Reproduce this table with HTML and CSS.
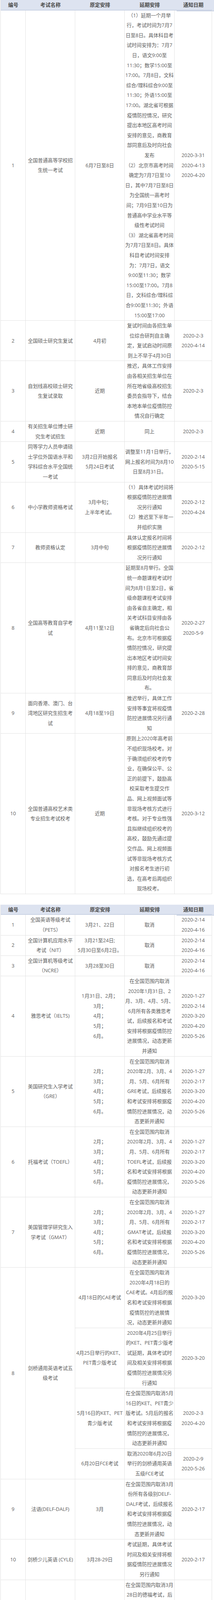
FILE: index.html
```html
<!DOCTYPE html>
<html lang="zh-CN">
<head>
<meta charset="utf-8">
<title>考试延期安排汇总</title>
<link rel="stylesheet" href="styles.css">
</head>
<body>
<div class="page">

<table class="tbl tbl-1">
<colgroup><col class="w1"><col class="w2"><col class="w3"><col class="w4"><col class="w5"></colgroup>
<thead><tr><th>编号</th><th>考试名称</th><th>原定安排</th><th>延期安排</th><th class="last">通知日期</th></tr></thead>
<tbody>
<tr><td>1</td><td>全国普通高等学校招<br>生统一考试</td><td>6月7日至8日</td><td>（1）延期一个月举<br>行，考试时间为7月7<br>日至8日。具体科目考<br>试时间安排为：7月7<br>日，语文9:00至<br>11:30；数学15:00至<br>17:00。7月8日，文科<br>综合/理科综合9:00至<br>11:30；外语15:00至<br>17:00。湖北省可根据<br>疫情防控情况，研究<br>提出本地区高考时间<br>安排的意见，商教育<br>部同意后及时向社会<br>发布<br>（2）北京市高考时间<br>确定为7月7日至10<br>日，其中7月7日至8日<br>为全国统一高考时<br>间；7月9日至10日为<br>普通高中学业水平等<br>级性考试时间<br>（3）湖北省高考时间<br>为7月7日至8日。具体<br>科目考试时间安排<br>为：7月7日，语文<br>9:00至11:30；数学<br>15:00至17:00。7月8<br>日，文科综合/理科综<br>合9:00至11:30；外语<br>15:00至17:00</td><td>2020-3-31<br>2020-4-13<br>2020-4-20</td></tr>
<tr><td>2</td><td>全国硕士研究生复试</td><td>4月初</td><td>复试时间由各招生单<br>位综合研判自主确<br>定，复试启动时间原<br>则上不早于4月30日</td><td>2020-2-3<br>2020-4-14</td></tr>
<tr><td>3</td><td>自划线高校硕士研究<br>生复试录取</td><td>近期</td><td>推迟，具体工作安排<br>由各相关招生单位在<br>所在地省级高校招生<br>委员会指导下，结合<br>本地本单位疫情防控<br>情况自行确定</td><td>2020-2-3</td></tr>
<tr><td>4</td><td>有关招生单位博士研<br>究生考试招生</td><td>近期</td><td>同上</td><td>2020-2-3</td></tr>
<tr><td>5</td><td>同等学力人员申请硕<br>士学位外国语水平和<br>学科综合水平全国统<br>一考试</td><td>3月2日开始报名<br>5月24日考试</td><td>调整至11月1日举行，<br>网上报名时间为8月10<br>日至8月31日。</td><td>2020-2-14<br>2020-5-15</td></tr>
<tr><td>6</td><td>中小学教师资格考试</td><td>3月中旬；<br>上半年考试。</td><td>（1）具体考试时间将<br>根据疫情防控进展情<br>况另行通知<br>（2）推迟至下半年一<br>并组织实施</td><td>2020-2-12<br>2020-4-24</td></tr>
<tr><td>7</td><td>教师资格认定</td><td>3月中旬</td><td>具体认定报名时间将<br>根据疫情防控进展情<br>况另行通知</td><td>2020-2-12</td></tr>
<tr><td>8</td><td>全国高等教育自学考<br>试</td><td>4月11至12日</td><td>延期至8月举行。全国<br>统一命题课程考试时<br>间为8月1日至2日，省<br>级命题课程考试安排<br>由各省自主确定，相<br>关考试科目安排由各<br>省确定后向社会公<br>布。北京市可根据疫<br>情防控情况，研究提<br>出本地区考试时间安<br>排的意见，商教育部<br>同意后及时向社会发<br>布。</td><td>2020-2-27<br>2020-5-9</td></tr>
<tr><td>9</td><td>面向香港、澳门、台<br>湾地区研究生招生考<br>试</td><td>4月18至19日</td><td>推迟举行，具体工作<br>安排等事宜将视疫情<br>防控进展情况另行通<br>知</td><td>2020-2-28</td></tr>
<tr><td>10</td><td>全国普通高校艺术类<br>专业招生考试校考</td><td>近期</td><td>原则上2020年高考前<br>不组织现场校考。对<br>于确须组织校考的专<br>业，在确保公平、公<br>正的前提下，鼓励高<br>校采取考生提交作<br>品、网上视频面试等<br>非现场考核方式进行<br>考核。对于专业性强<br>且拟继续组织校考的<br>高校，鼓励先通过提<br>交作品、网上视频面<br>试等非现场考核方式<br>对报名考生进行初<br>选，在高考后再组织<br>现场校考。</td><td>2020-3-12</td></tr>
</tbody>
</table>

<table class="tbl tbl-2">
<colgroup><col class="w1"><col class="w2"><col class="w3"><col class="w4"><col class="w5"></colgroup>
<thead><tr><th>编号</th><th>考试名称</th><th>原定安排</th><th>延期安排</th><th class="last">通知日期</th></tr></thead>
<tbody>
<tr><td>1</td><td>全国英语等级考试<br>（PETS）</td><td>3月21、22日</td><td>取消</td><td>2020-2-14<br>2020-4-16</td></tr>
<tr><td>2</td><td>全国计算机应用水平<br>考试（NIT）</td><td>3月21至24日;<br>5月30日至6月2日。</td><td>取消</td><td>2020-2-14<br>2020-4-16</td></tr>
<tr><td>3</td><td>全国计算机等级考试<br>（NCRE）</td><td>3月28至30日</td><td>取消</td><td>2020-2-14<br>2020-4-16</td></tr>
<tr><td>4</td><td>雅思考试（IELTS)</td><td>1月31日、2月；<br>3月；<br>4月；<br>5月；<br>6月。</td><td>在全国范围内取消<br>2020年1月31日、2<br>月、3月、4月、5月、<br>6月所有各类雅思考<br>试，后续报名和考试<br>安排将根据疫情防控<br>进展情况，动态更新<br>并通知</td><td>2020-1-27<br>2020-2-14<br>2020-3-20<br>2020-4-20<br>2020-5-26</td></tr>
<tr><td>5</td><td>美国研究生入学考试<br>（GRE）</td><td>2月；<br>3月；<br>4月；<br>5月；<br>6月。</td><td>在全国范围内取消<br>2020年2月、3月、4<br>月、5月、6月所有<br>GRE考试，后续报名<br>和考试安排将根据疫<br>情防控进展情况，动<br>态更新并通知</td><td>2020-1-27<br>2020-2-17<br>2020-3-20<br>2020-4-20<br>2020-5-26</td></tr>
<tr><td>6</td><td>托福考试（TOEFL）</td><td>2月；<br>3月；<br>4月；<br>5月；<br>6月。</td><td>在全国范围内取消<br>2020年2月、3月、4<br>月、5月、6月所有<br>TOEFL考试，后续报<br>名和考试安排将根据<br>疫情防控进展情况，<br>动态更新并通知</td><td>2020-1-27<br>2020-2-17<br>2020-3-20<br>2020-4-20<br>2020-5-26</td></tr>
<tr><td>7</td><td>美国管理学研究生入<br>学考试（GMAT）</td><td>2月；<br>3月；<br>4月；<br>5月；<br>6月。</td><td>在全国范围内取消<br>2020年2月、3月、4<br>月、5月、6月所有<br>GMAT考试，后续报<br>名和考试安排将根据<br>疫情防控进展情况，<br>动态更新并通知</td><td>2020-1-27<br>2020-2-17<br>2020-3-20<br>2020-4-20<br>2020-5-26</td></tr>
<tr><td rowspan="4">8</td><td rowspan="4">剑桥通用英语考试五<br>级考试</td><td>4月18日的CAE考试</td><td>在全国范围内取消<br>2020年4月18日的<br>CAE考试。4月后的报<br>名和考试安排将根据<br>疫情防控的进展情<br>况，动态更新并通知</td><td>2020-3-20</td></tr>
<tr><td>4月25日举行的KET、<br>PET青少版考试</td><td>2020年4月25日举行<br>的KET、PET青少版考<br>试延期，具体考试时<br>间及相关安排将根据<br>疫情防控进展情况另<br>行通知</td><td>2020-3-20</td></tr>
<tr><td>5月16日的KET、PET<br>青少版考试</td><td>在全国范围内取消5月<br>16日的KET、PET青少<br>版考试。5月后的报名<br>和考试安排将根据疫<br>情防控的进展情况，<br>动态更新并通知</td><td>2020-2-3<br>2020-4-20</td></tr>
<tr><td>6月20日FCE考试</td><td>取消2020年6月20日<br>举行的剑桥通用英语<br>五级FCE考试</td><td>2020-2-9<br>2020-5-26</td></tr>
<tr><td>9</td><td>法语(DELF-DALF)</td><td>3月</td><td>在全国范围内取消3月<br>份所有各级别DELF-<br>DALF考试，后续报名<br>和考试安排将根据疫<br>情防控进展情况，动<br>态更新并通知</td><td>2020-2-17</td></tr>
<tr><td>10</td><td>剑桥少儿英语 (CYLE)</td><td>3月28-29日</td><td>考试延期，具体考试<br>时间及相关安排将根<br>据疫情防控进展情况<br>另行通知</td><td>2020-2-17</td></tr>
<tr><td>11</td><td>德福（TestDaF）考试</td><td>3月28日</td><td>在全国范围内取消3月<br>28日的德福考试，后<br>续报名和考试安排将<br>根据疫情防控进展情<br>况，动态更新并通知</td><td>2020-2-17</td></tr>
<tr><td>12</td><td>美国法学院入学考试<br>（LSAT）</td><td>3月29日；<br>6月28日。</td><td>在全国范围内取消<br>2020年3月29日、6月<br>28日的考试，具体恢<br>复报时间另行通知</td><td>2020-2-20<br>2020-5-26</td></tr>
<tr><td>13</td><td>全国大学英语四六级<br>考试（CET）</td><td>3月（报名）；<br>6月13日。</td><td>（1）推迟报名，根据<br>疫情防控的进展情<br>况，动态更新并通知<br>报名时间；<br>（2）考试时间将视情<br>况另行通知；<br>（3）原定于2020年6<br>月13日举行的全国大<br>学英语四、六级考试<br>延期并分两次举行，<br>考试日期分别为7月11<br>日和9月19日</td><td>2020-2-26<br>2020-4-16<br>2020-05-29</td></tr>
<tr><td>14</td><td>全国大学英语四六级<br>口语考试（CET-SET）</td><td>3月（报名）;<br>5月23至24日。</td><td>（1）推迟报名，根据<br>疫情防控的进展情<br>况，动态更新并通知<br>报名时间；<br>（2）取消</td><td>2020-2-26<br>2020-4-16</td></tr>
<tr><td>15</td><td>全国外语水平考试<br>（WSK）</td><td>3月（报名）;<br>5月16至17日。</td><td>（1）推迟报名，根据<br>疫情防控的进展情<br>况，动态更新并通知<br>报名时间；<br>（2）取消</td><td>2020-2-26<br>2020-4-16</td></tr>
<tr><td>16</td><td>书画等级考试<br>（CCPT）</td><td>3月（报名）;<br>5月23至24日。</td><td>（1）推迟报名，根据<br>疫情防控的进展情<br>况，动态更新并通知<br>报名时间<br>（2）取消</td><td>2020-2-26<br>2020-4-16</td></tr>
<tr><td>17</td><td>韩国语能力考试<br>（TOPIK）</td><td>4月12日</td><td>延期举行，具体考试<br>时间及相关安排将根<br>据疫情防控进展情况<br>另行通知</td><td>2020-3-20</td></tr>
<tr><td>18</td><td>剑桥商务英语证书考<br>试（BEC）</td><td>5月16日、23日、30<br>日</td><td>推迟举行原定于5月<br>16、23、30日举行的<br>剑桥商务英语证书初<br>级、高级和中级考<br>试，具体考试时间及<br>相关安排将根据疫情<br>防控进展情况另行通<br>知</td><td>2020-4-20</td></tr>
<tr><td>19</td><td>日本语能力测试<br>（JLPT）</td><td>7月5日</td><td>在中国大陆范围内取<br>消原定于2020年7月5<br>日举行的日本语能力<br>测试</td><td>2020-5-21</td></tr>
</tbody>
</table>

<table class="tbl tbl-3">
<colgroup><col class="w1"><col class="w2"><col class="w3"><col class="w4"><col class="w5"></colgroup>
<thead><tr><th>编号</th><th>考试名称</th><th>原定安排</th><th>延期安排</th><th class="last">通知日期</th></tr></thead>
<tbody>
<tr><td>1</td><td>全国高等学校英语专<br>业四、八级考试<br>（TEM）</td><td>3月21日（专八）、4<br>月18日（专四）</td><td>考试时间进行适当调<br>整，具体考试时间将<br>根据疫情防控工作进<br>展另行通知</td><td>2020-2-25</td></tr>
<tr><td>2</td><td>德语专业八级考试</td><td>3月13日</td><td>考试时间进行适当调<br>整，具体考试时间将<br>根据疫情防控工作进<br>展另行通知</td><td>2020-2-25</td></tr>
<tr><td>3</td><td>西班牙语专业八级考<br>试</td><td>3月20日</td><td>同上</td><td>2020-2-25</td></tr>
<tr><td>4</td><td>俄语专业八级考试</td><td>3月22日</td><td>同上</td><td>2020-2-25</td></tr>
<tr><td>5</td><td>法语专业八级考试</td><td>3月27日</td><td>同上</td><td>2020-2-25</td></tr>
</tbody>
</table>

<p class="note">* 本表汇总仅供参考，具体信息以考试官网为准。</p>

</div>
</body>
</html>
```

FILE: styles.css
```css
html, body {
  margin: 0;
  padding: 0;
  background: #ffffff;
}

.page {
  width: 549px;
  padding-left: 1px;
  box-sizing: border-box;
}

.tbl {
  table-layout: fixed;
  border-collapse: separate;
  border-spacing: 0;
  width: 543px;
  border-left: 1px solid #e2e2e2;
  font-family: "Open Sans", "Noto Sans CJK SC", sans-serif;
  font-size: 12.8px;
  color: #5e5e5e;
}

.tbl-2 { margin-top: 26.7px; }
.tbl-3 { margin-top: 51.7px; }

.w1 { width: 64px; }
.w2 { width: 127px; }
.w3 { width: 127px; }
.w4 { width: 128px; }
.w5 { width: 96px; }

.tbl th {
  background: #dde3f0;
  color: #4b4b4b;
  font-family: "Noto Sans CJK SC", sans-serif;
  font-weight: 700;
  font-size: 13px;
  line-height: 24.7px;
  padding: 0;
  border-bottom: 2px solid #cad3e4;
  text-align: center;
  white-space: nowrap;
}

.tbl th.last {
  box-shadow: 5px 0 0 #dde3f0, 5px 2px 0 #cad3e4;
}

.tbl td {
  padding: 0 1px;
  line-height: 25.6px;
  text-align: center;
  vertical-align: middle;
  white-space: nowrap;
  border-right: 1px solid #e2e2e2;
  border-bottom: 1px solid #e2e2e2;
}

.note {
  margin: 17px 0 0 2px;
  font-family: "Noto Sans CJK SC", sans-serif;
  font-size: 11.5px;
  line-height: 20px;
  letter-spacing: 1.3px;
  color: #3a3a3a;
}
```
